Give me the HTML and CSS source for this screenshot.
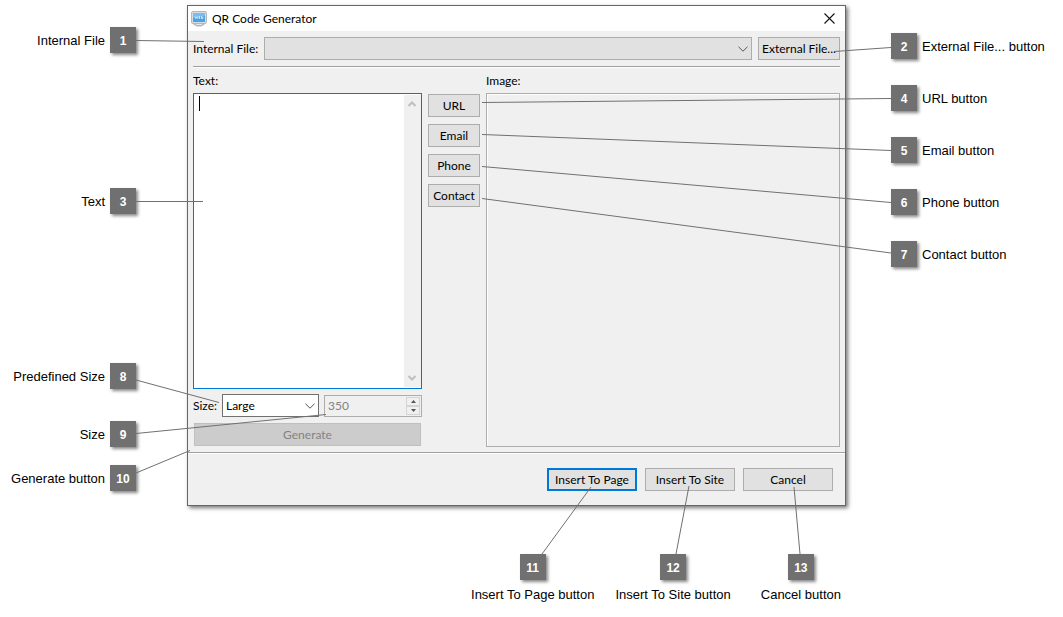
FILE: index.html
```html
<!DOCTYPE html>
<html lang="en">
<head>
<meta charset="utf-8">
<title>QR Code Generator</title>
<link rel="stylesheet" href="styles.css">
</head>
<body>
<main class="figure">
  <section class="side side-left" aria-label="Callouts, left">
    <div class="callout pin-1"><span>Internal File</span><b class="badge">1</b></div>
    <div class="callout pin-3"><span>Text</span><b class="badge">3</b></div>
    <div class="callout pin-8"><span>Predefined Size</span><b class="badge">8</b></div>
    <div class="callout pin-9"><span>Size</span><b class="badge">9</b></div>
    <div class="callout pin-10"><span>Generate button</span><b class="badge">10</b></div>
  </section>

  <form class="window">
    <header class="titlebar">
      <svg class="app-icon" viewBox="0 0 16 16" aria-hidden="true">
        <rect x="0.5" y="0.5" width="15" height="12" rx="1.5" fill="#d9dcdf" stroke="#b4b8bc"/>
        <rect x="2" y="2" width="12" height="9" fill="#4da3e2"/>
        <path d="M2 2h12v3L2 7z" fill="#79bced"/>
        <path d="M4 5.500l.7 2 .7-1.600.7 1.600.7-2M9.200 5.500H8v2h1.200M8 6.500h1M10.500 5v2.500h1.500v-1.300h-1.500" fill="none" stroke="#e4f3fd" stroke-width=".7"/>
        <path d="M2 13h12l-2 1.500-2 1H6l-2-1z" fill="#b4b8bb"/>
        <path d="M5 13h6v1H5z" fill="#e4e6e8"/>
      </svg>
      <h1 class="title">QR Code Generator</h1>
      <button class="close" type="button" aria-label="Close">
        <svg viewBox="0 0 11 11" aria-hidden="true"><path d="M.5.5l10 10M10.500.5l-10 10" fill="none" stroke="#111" stroke-width="1.100"/></svg>
      </button>
    </header>

    <div class="file-row">
      <label for="internal">Internal File:</label>
      <div class="combo combo-flat">
        <select id="internal"><option></option></select>
        <svg class="chevron" viewBox="0 0 10 6" aria-hidden="true"><path d="M.5.8L5 5.200 9.500.8"/></svg>
      </div>
      <button class="btn btn-file" type="button">External File...</button>
    </div>

    <div class="content">
      <div class="text-pane">
        <label class="caption" for="text">Text:</label>
        <div class="editor">
          <textarea id="text"></textarea>
          <span class="caret"></span>
          <div class="scrollbar">
            <svg class="arrow" viewBox="0 0 8 6" aria-hidden="true"><path d="M.5 5L4 1.500 7.500 5"/></svg>
            <svg class="arrow" viewBox="0 0 8 6" aria-hidden="true"><path d="M.5 1L4 4.500 7.500 1"/></svg>
          </div>
        </div>
        <div class="size-row">
          <label for="preset">Size:</label>
          <div class="combo combo-size">
            <select id="preset"><option>Large</option></select>
            <svg class="chevron" viewBox="0 0 10 6" aria-hidden="true"><path d="M.5.8L5 5.200 9.500.8"/></svg>
          </div>
          <div class="spinner">
            <input type="text" value="350" aria-label="Size in pixels" disabled>
            <div class="steps">
              <button type="button" aria-label="Increase" disabled><svg viewBox="0 0 5 3" aria-hidden="true"><path d="M0 3L2.500 0 5 3z"/></svg></button>
              <button type="button" aria-label="Decrease" disabled><svg viewBox="0 0 5 3" aria-hidden="true"><path d="M0 0L2.500 3 5 0z"/></svg></button>
            </div>
          </div>
        </div>
        <button class="btn btn-generate" type="button" disabled>Generate</button>
      </div>
      <div class="kinds">
        <button class="btn" type="button">URL</button>
        <button class="btn" type="button">Email</button>
        <button class="btn" type="button">Phone</button>
        <button class="btn" type="button">Contact</button>
      </div>
      <div class="image-pane">
        <span class="caption">Image:</span>
        <div class="preview"></div>
      </div>
    </div>

    <footer class="actions">
      <button class="btn btn-default" type="button">Insert To Page</button>
      <button class="btn" type="button">Insert To Site</button>
      <button class="btn" type="button">Cancel</button>
    </footer>
  </form>

  <section class="side side-right" aria-label="Callouts, right">
    <div class="callout pin-2"><b class="badge">2</b><span>External File... button</span></div>
    <div class="callout pin-4"><b class="badge">4</b><span>URL button</span></div>
    <div class="callout pin-5"><b class="badge">5</b><span>Email button</span></div>
    <div class="callout pin-6"><b class="badge">6</b><span>Phone button</span></div>
    <div class="callout pin-7"><b class="badge">7</b><span>Contact button</span></div>
  </section>

  <section class="below" aria-label="Callouts, below">
    <div class="callout"><b class="badge">11</b><span>Insert To Page button</span></div>
    <div class="callout"><b class="badge">12</b><span>Insert To Site button</span></div>
    <div class="callout"><b class="badge">13</b><span>Cancel button</span></div>
  </section>

  <svg class="leaders" viewBox="0 0 1063 617" preserveAspectRatio="none" aria-hidden="true">
    <path d="M136 40.500L204 41.500M891 47.500L834 51.500M136 201.500H203M891 98.500L482 102.500M891 150.500L482 134.500M891 202.500L482 166.500M891 253L482 198.500M136 380L219 402.500M136 433.500L326 414.500M136 473L190 450.500M542 554L591 487M676 554L689 486M800 554L794 487"/>
  </svg>
</main>
</body>
</html>
```
FILE: styles.css
```css
* {
  box-sizing: border-box;
}

body {
  margin: 0;
  background: #fff;
  color: #000;
  font: 12px/16px Lato, "Open Sans", sans-serif;
}

button,
input,
select,
textarea {
  margin: 0;
  font: inherit;
  color: inherit;
}

.figure {
  position: relative;
  display: grid;
  grid-template-columns: 187px minmax(0, 1fr) 217px;
  grid-template-rows: auto auto;
  padding: 5px 0 14px;
}

/* Callouts */
.side {
  position: relative;
}

.callout {
  display: flex;
  align-items: center;
  gap: 5px;
  font: 13px/16px "Liberation Sans", Arial, sans-serif;
  white-space: nowrap;
}

.callout span {
  padding-top: 2px;
}

.side .callout {
  position: absolute;
}

.side-left .callout {
  right: 51px;
}

.side-right .callout {
  left: 45px;
}

.badge {
  display: block;
  width: 26px;
  height: 26px;
  flex: none;
  background: #707070;
  color: #fff;
  font-size: 12px;
  line-height: 28px;
  text-align: center;
  box-shadow: 2px 2px 3px #888;
}

.pin-1 { top: 22px; }
.pin-2 { top: 28px; }
.pin-3 { top: 183px; }
.pin-4 { top: 80px; }
.pin-5 { top: 132px; }
.pin-6 { top: 184px; }
.pin-7 { top: 236px; }
.pin-8 { top: 358px; }
.pin-9 { top: 416px; }
.pin-10 { top: 460px; }

.below {
  grid-column: 2;
  display: flex;
  justify-content: flex-end;
  gap: 21px;
  padding: 48px 5px 0 0;
}

.below .callout {
  flex-direction: column;
}

.below .callout:last-child {
  padding-left: 9px;
}

.leaders {
  position: absolute;
  inset: 0;
  width: 100%;
  height: 100%;
  pointer-events: none;
}

.leaders path {
  fill: none;
  stroke: #707070;
  stroke-width: 1;
  vector-effect: non-scaling-stroke;
}

/* Dialog window */
.window {
  display: flex;
  flex-direction: column;
  border: 1px solid #1979ca;
  background: #f0f0f0;
  box-shadow: 2px 2px 4px #777;
}

.titlebar {
  display: flex;
  align-items: center;
  gap: 5px;
  height: 25px;
  padding: 0 9px 0 3px;
  background: #fff;
}

.app-icon {
  width: 16px;
  height: 16px;
}

.title {
  flex: 1;
  margin: 0;
  font-size: 12px;
  font-weight: 400;
}

.close {
  display: flex;
  padding: 1px;
  border: 0;
  background: none;
}

.close svg {
  width: 11px;
  height: 11px;
}

.file-row {
  display: flex;
  align-items: center;
  gap: 6px;
  margin: 0 5px;
  padding: 6px 0;
  border-bottom: 1px solid #a0a0a0;
  box-shadow: 0 1px #fff;
}

.btn {
  height: 23px;
  padding: 0;
  border: 1px solid #adadad;
  background: #e1e1e1;
  line-height: 20px;
  text-align: center;
  white-space: nowrap;
}

.btn-file {
  width: 82px;
}

.combo {
  position: relative;
  height: 23px;
}

.combo select {
  display: block;
  width: 100%;
  height: 100%;
  padding: 0 20px 0 3px;
  border: 1px solid #707070;
  border-radius: 0;
  background: #fff;
  appearance: none;
}

.combo-flat {
  flex: 1;
}

.combo-flat select {
  border-color: #adadad;
  background: #e1e1e1;
}

.chevron {
  position: absolute;
  top: 9px;
  right: 4px;
  width: 10px;
  height: 6px;
  fill: none;
  stroke: #555;
  pointer-events: none;
}

.content {
  display: flex;
  gap: 6px;
  padding: 6px 5px 5px;
}

.caption {
  display: block;
  margin-bottom: 4px;
}

.text-pane {
  width: 229px;
}

.editor {
  position: relative;
  display: flex;
  height: 296px;
  border: 1px solid #0078d7;
  background: #fff;
}

.editor textarea {
  flex: 1;
  min-width: 0;
  padding: 2px 5px;
  border: 0;
  outline: 0;
  background: none;
  resize: none;
}

.caret {
  position: absolute;
  top: 2px;
  left: 5px;
  width: 1px;
  height: 15px;
  background: #000;
}

.scrollbar {
  display: flex;
  flex-direction: column;
  justify-content: space-between;
  align-items: center;
  width: 17px;
  margin: 1px 0;
  padding: 6px 2px 6px 0;
  background: #f0f0f0;
}

.arrow {
  width: 8px;
  height: 6px;
  fill: none;
  stroke: #bfbfbf;
  stroke-width: 2;
}

.size-row {
  display: flex;
  align-items: center;
  gap: 5px;
  margin-top: 5px;
}

.combo-size {
  width: 97px;
}

.spinner {
  display: flex;
  flex: 1;
  height: 22px;
  border: 1px solid #adadad;
  background: #f0f0f0;
}

.spinner input {
  flex: 1;
  min-width: 0;
  width: 0;
  padding: 0 3px;
  border: 0;
  background: none;
  color: #838383;
}

.steps {
  display: flex;
  flex-direction: column;
  width: 16px;
  padding: 1px;
}

.steps button {
  display: flex;
  flex: 1;
  align-items: center;
  justify-content: center;
  padding: 0;
  border: 1px solid #d4d4d4;
  background: #f0f0f0;
}

.steps svg {
  width: 5px;
  height: 3px;
  fill: #555;
}

.btn-generate {
  display: block;
  width: calc(100% - 2px);
  margin: 6px auto 1px;
  border-color: #bfbfbf;
  background: #ccc;
  color: #838383;
}

.kinds {
  display: flex;
  flex-direction: column;
  gap: 7px;
  width: 52px;
  padding-top: 21px;
}

.image-pane {
  display: flex;
  flex: 1;
  flex-direction: column;
}

.preview {
  flex: 1;
  border: 1px solid #adadad;
  box-shadow: inset 1px 1px #fff;
}

.actions {
  display: flex;
  justify-content: flex-end;
  gap: 8px;
  padding: 15px 12px 14px;
  border-top: 1px solid #a0a0a0;
  box-shadow: inset 0 1px #fff;
}

.actions .btn {
  width: 90px;
}

.actions .btn-default {
  border: 2px solid #0078d7;
  line-height: 18px;
}
```
